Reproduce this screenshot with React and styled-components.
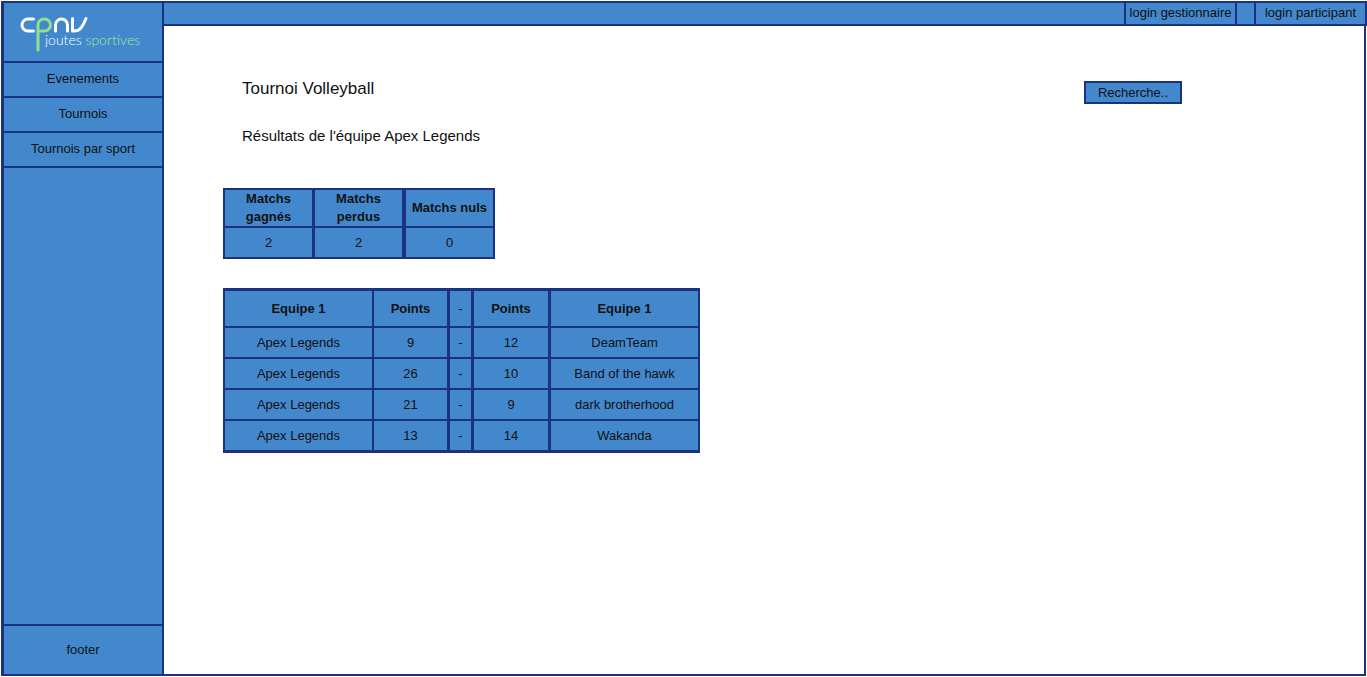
import React from "react";
import styled, { createGlobalStyle } from "styled-components";

const fill = "#4388cd";
const line = "#1b3281";

const Global = createGlobalStyle`
  *, *::before, *::after { box-sizing: border-box; }
  body {
    margin: 0;
    background: #fff;
    color: #111;
    font: 13px/18px "Liberation Sans", Arial, sans-serif;
  }
`;

const Page = styled.div`
  display: grid;
  grid-template-columns: 163px 1fr;
  min-height: 100vh;
  padding: 1px 0 1px 1px;
`;

const Sidebar = styled.aside`
  display: flex;
  flex-direction: column;
  background: ${fill};
  border: 2px solid ${line};
  border-left-width: 3px;
`;

const LogoLink = styled.a`
  display: block;
  height: 60px;
  border-bottom: 2px solid ${line};
  svg { display: block; }
`;

const Nav = styled.nav`
  display: flex;
  flex: 1;
  flex-direction: column;
`;

const NavLink = styled.a`
  padding: 7px 0 8px;
  border-bottom: 2px solid ${line};
  color: inherit;
  text-align: center;
  text-decoration: none;
`;

const Footer = styled.footer`
  padding: 15px 0;
  border-top: 2px solid ${line};
  text-align: center;
`;

const Content = styled.div`
  display: flex;
  flex-direction: column;
`;

const TopBar = styled.header`
  display: flex;
  justify-content: flex-end;
  gap: 17px;
  height: 25px;
  background: ${fill};
  box-shadow: inset 0 2px ${line}, inset 0 -2px ${line};
`;

const LoginButton = styled.button`
  width: 113px;
  padding: 0 0 2px;
  border: 2px solid ${line};
  background: ${fill};
  color: inherit;
  font: inherit;
  white-space: nowrap;
`;

const Main = styled.main`
  flex: 1;
  margin-right: 1px;
  padding: 53px 182px 24px 59px;
  border: solid ${line};
  border-width: 0 2px 2px 0;
`;

const TitleRow = styled.div`
  display: flex;
  justify-content: space-between;
  padding-left: 19px;
`;

const Title = styled.h1`
  margin: 0;
  font-size: 17px;
  font-weight: 400;
  line-height: 20px;
`;

const Subtitle = styled.h2`
  margin: 22px 0 42px;
  padding-left: 19px;
  font-size: 15px;
  font-weight: 400;
  line-height: 20px;
`;

const Search = styled.input`
  width: 98px;
  height: 23px;
  margin-top: 2px;
  padding: 0;
  border: 2px solid ${line};
  border-radius: 0;
  background: ${fill};
  color: inherit;
  font: inherit;
  text-align: center;
  &::placeholder { color: #111; opacity: 1; }
`;

const Table = styled.table`
  margin-bottom: 29px;
  border: solid ${line};
  border-width: ${(p) => p.$edge}px 0 0 2px;
  border-spacing: 0;
  background: ${fill};
  table-layout: fixed;
  width: ${(p) => p.$width}px;
  tr:last-child > td {
    height: ${(p) => p.$edge + 29}px;
    border-bottom-width: ${(p) => p.$edge}px;
  }
`;

const Col = styled.col`
  width: ${(p) => p.$width}px;
`;

const HeadCell = styled.th`
  height: ${(p) => p.$height}px;
  padding: 0 4px;
  border: solid ${line};
  border-width: 0 ${(p) => p.$rule}px 2px 0;
  font-weight: ${(p) => (p.$plain ? 400 : 700)};
`;

const Cell = styled.td`
  height: 31px;
  padding: 0;
  border: solid ${line};
  border-width: 0 ${(p) => p.$rule}px 2px 0;
  text-align: center;
`;

function Logo() {
  return (
    <svg width="158" height="58" viewBox="4 3 158 58" role="img" aria-label="cpnv joutes sportives">
      <g fill="none" strokeWidth="3" strokeLinejoin="round" strokeLinecap="round">
        <path stroke="#fff" d="M33.500 19H28a6 6 0 0 0 0 12h5.500" />
        <path stroke="#8fe08f" d="M38 50V25a6 6 0 0 1 6-6h0.500a6 6 0 0 1 0 12H39" />
        <path stroke="#fff" d="M55.500 31V25a6 6 0 0 1 12 0v6" />
        <path stroke="#fff" d="M72.500 18.500V31H74c6 0 8.500-4 12-12.500" />
      </g>
      <text x="45" y="45" fontFamily="Lato, sans-serif" fontWeight="300" fontSize="14" fill="#fff">
        joutes <tspan fill="#9cf08c">sportives</tspan>
      </text>
    </svg>
  );
}

const summary = {
  width: 272,
  edge: 2,
  headHeight: 38,
  columns: [
    { label: "Matchs gagnés", width: 90, rule: 3 },
    { label: "Matchs perdus", width: 91, rule: 4 },
    { label: "Matchs nuls", width: 89, rule: 2 },
  ],
  rows: [["2", "2", "0"]],
};

const results = {
  width: 477,
  edge: 3,
  headHeight: 37,
  columns: [
    { label: "Equipe 1", width: 149, rule: 2 },
    { label: "Points", width: 76, rule: 3 },
    { label: "-", width: 24, rule: 3, plain: true },
    { label: "Points", width: 77, rule: 3 },
    { label: "Equipe 1", width: 149, rule: 2 },
  ],
  rows: [
    ["Apex Legends", "9", "-", "12", "DeamTeam"],
    ["Apex Legends", "26", "-", "10", "Band of the hawk"],
    ["Apex Legends", "21", "-", "9", "dark brotherhood"],
    ["Apex Legends", "13", "-", "14", "Wakanda"],
  ],
};

function DataTable({ data, label }) {
  return (
    <Table $width={data.width} $edge={data.edge} aria-label={label}>
      <colgroup>
        {data.columns.map((c, i) => <Col key={i} $width={c.width} />)}
      </colgroup>
      <thead>
        <tr>
          {data.columns.map((c, i) => (
            <HeadCell key={i} scope="col" $height={data.headHeight} $rule={c.rule} $plain={c.plain}>
              {c.label}
            </HeadCell>
          ))}
        </tr>
      </thead>
      <tbody>
        {data.rows.map((row, r) => (
          <tr key={r}>
            {row.map((value, i) => (
              <Cell key={i} $rule={data.columns[i].rule}>{value}</Cell>
            ))}
          </tr>
        ))}
      </tbody>
    </Table>
  );
}

export default function App() {
  return (
    <>
      <Global />
      <Page>
        <Sidebar>
          <LogoLink href="#"><Logo /></LogoLink>
          <Nav>
            <NavLink href="#evenements">Evenements</NavLink>
            <NavLink href="#tournois">Tournois</NavLink>
            <NavLink href="#sports">Tournois par sport</NavLink>
          </Nav>
          <Footer>footer</Footer>
        </Sidebar>
        <Content>
          <TopBar>
            <LoginButton type="button">login gestionnaire</LoginButton>
            <LoginButton type="button">login participant</LoginButton>
          </TopBar>
          <Main>
            <TitleRow>
              <Title>Tournoi Volleyball</Title>
              <Search type="text" placeholder="Recherche.." aria-label="Recherche" />
            </TitleRow>
            <Subtitle>Résultats de l'équipe Apex Legends</Subtitle>
            <DataTable data={summary} label="Bilan des matchs" />
            <DataTable data={results} label="Résultats des matchs" />
          </Main>
        </Content>
      </Page>
    </>
  );
}
